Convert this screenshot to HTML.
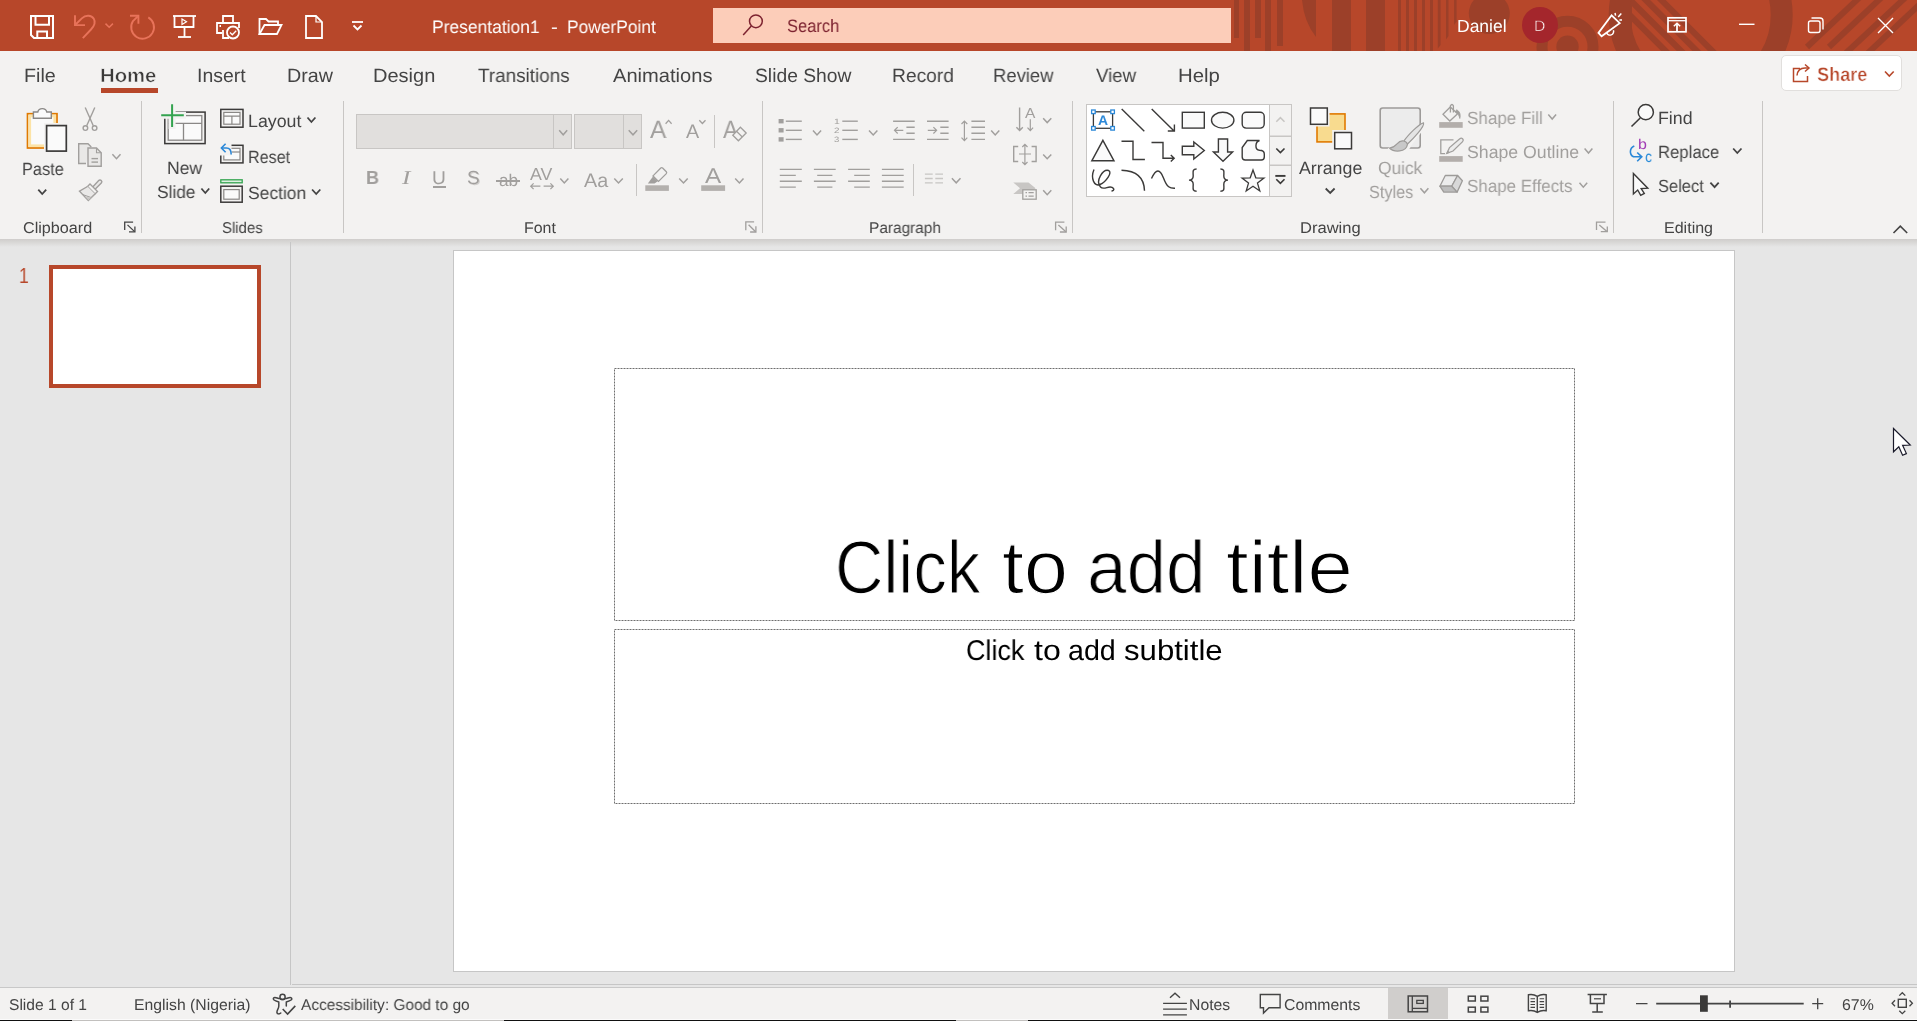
<!DOCTYPE html>
<html lang="en">
<head>
<meta charset="utf-8">
<title>Presentation1 - PowerPoint</title>
<style>
html,body{margin:0;padding:0;}
body{width:1917px;height:1021px;overflow:hidden;position:relative;background:#e6e6e6;font-family:"Liberation Sans",sans-serif;color:#444;}
.abs,.t,svg.i{position:absolute;}
svg.i{left:0;top:0;overflow:visible;}
.t{white-space:nowrap;line-height:1;transform-origin:0 0;will-change:transform;text-rendering:geometricPrecision;}
#titlebar{position:absolute;left:0;top:0;width:1917px;height:51px;background:#b7472a;overflow:hidden;}
#ribbon{position:absolute;left:0;top:51px;width:1917px;height:188px;background:#f3f2f1;}
#rshadow{position:absolute;left:0;top:239px;width:1917px;height:8px;background:linear-gradient(#cfcdcb,#e6e6e6);}
#status{position:absolute;left:0;top:988px;width:1917px;height:33px;background:#f3f2f1;}
.w{position:absolute;top:0;white-space:nowrap;transform-origin:0 0;will-change:transform;}
.thin{-webkit-text-stroke:1.2px #fff;}
.sep{position:absolute;width:1px;background:#c8c6c4;}
</style>
</head>
<body>
<div id="titlebar"></div>
<div id="ribbon"></div>
<div id="rshadow"></div>
<div id="status"></div>
<svg class="i" width="1917" height="51" viewBox="0 0 1917 51" style="overflow:hidden">
<g fill="#9c4029">
<rect x="1234" y="0" width="5" height="38"/><rect x="1244" y="0" width="6" height="51"/><rect x="1255" y="0" width="6" height="38"/><rect x="1265" y="0" width="6" height="51"/><rect x="1277" y="0" width="6" height="46"/>
<path d="M1302 0 H1316 V37 Q1304 22 1302 0Z"/>
<rect x="1332" y="0" width="19" height="51"/><rect x="1366" y="0" width="19" height="51"/>
<rect x="1398" y="0" width="3" height="51"/><rect x="1406" y="0" width="3" height="51"/><rect x="1414" y="0" width="3" height="51"/><rect x="1422" y="0" width="3" height="51"/><rect x="1430" y="0" width="3" height="51"/><path d="M1437.800 0 H1440.600 V45 L1437.800 48.500 Z"/><path d="M1446 0 H1448.500 V36 L1446 39.500 Z"/><path d="M1454.100 0 H1456.600 V21.500 L1454.100 25 Z"/>
<circle cx="1489.300" cy="13.500" r="20.500"/>
</g>
<circle cx="1567.500" cy="46.700" r="11.200" fill="#9c4029"/>
<g fill="none" stroke="#9c4029">
<circle cx="1567.500" cy="46.700" r="25.500" stroke-width="11"/>
<circle cx="1700.700" cy="15" r="81" stroke-width="22"/>
</g>
<clipPath id="cpa"><circle cx="1700.700" cy="15" r="71"/></clipPath>
<g fill="#9c4029" clip-path="url(#cpa)"><rect x="1620" y="0" width="12" height="51"/><g clip-path="url(#cpb)"><path d="M1605.2 -5 L1613.9 -5 L1678.9 60 L1670.2 60 Z"/><path d="M1620.8 -5 L1629.5 -5 L1694.5 60 L1685.8 60 Z"/><path d="M1636.4 -5 L1645.1 -5 L1710.1 60 L1701.4 60 Z"/><path d="M1652.0 -5 L1660.7 -5 L1725.7 60 L1717.0 60 Z"/></g></g>
<clipPath id="cpb"><path d="M1632 0 H1676 L1718 51 H1632 Z"/></clipPath>
<g stroke="#9c4029" stroke-width="6" fill="none">
<path d="M1807 47 L1860 -3"/><path d="M1829 47 L1882 -3"/><path d="M1846 53 L1906 -3"/><path d="M1868 53 L1920 4"/>
</g>
</svg>
<div class="abs" style="left:713px;top:8px;width:518px;height:35px;background:#fccdb9"></div>
<svg class="i" width="1917" height="51" viewBox="0 0 1917 51" fill="none" stroke="#fff" stroke-width="1.8">
<!-- save -->
<g stroke-width="2"><path d="M31 16 H53 V38 H34 L31 35 Z"/><path d="M35.500 16 V24.700 H49 V16"/><path d="M37.300 38 V31.400 H47 V38"/></g>
<!-- undo -->
<g stroke="#e8735a" stroke-width="1.900"><path d="M75 15.200 V25.100 H85"/><path d="M75.600 24.500 L81.800 18.400 C85.800 14.500 91.500 15 93.800 18.800 C95.800 22.300 94.500 25.800 91 29.500 L82.800 38.200"/><path d="M105.500 23.600 L109.200 27.300 L112.900 23.600" stroke-width="1.500"/>
<!-- redo -->
<path d="M130 15.700 H138.400 V23.800"/><path d="M137.800 16.300 L133 21.100 A11.400 11.400 0 1 0 148.300 17.400"/></g>
<!-- slideshow -->
<path d="M173 16 H196"/><path d="M174.500 16 V27 H193.500 V16"/><path d="M184.500 27 V37"/><path d="M178 37 H191"/><path d="M182 19 L186.500 21.800 L182 24.500 Z" stroke-width="1.2"/>
<!-- print preview -->
<path d="M223 23 V16 H233 V23"/><path d="M222 33 H217 V23 H239 V28"/><path d="M223 30 V38 H229"/><path d="M219.500 26 H221"/><circle cx="233" cy="32.500" r="6"/><path d="M230 32.500 L232.300 34.800 L236.200 30.800" stroke-width="1.3"/>
<!-- open -->
<path d="M259.500 34 V19 H266 L268.500 21.500 H278 V25"/><path d="M259.500 34 L264.500 25 H281.500 L277 34 Z"/>
<!-- new -->
<path d="M306 16 H316 L322 22 V38 H306 Z"/><path d="M316 16 V22 H322" stroke-width="1.2"/>
<!-- customize -->
<path d="M352 22 H363"/><path d="M353.500 25.500 L357.500 29.500 L361.500 25.500"/>
<!-- search icon -->
<g stroke="#7d2330" stroke-width="1.500"><circle cx="755.900" cy="21.300" r="6.400"/><path d="M751.300 25.900 L743.200 35"/></g>
<!-- megaphone -->
<path d="M1598.500 32.900 L1611.600 15.300 L1619.700 23.200 L1601.600 36.300 Z"/><path d="M1606.600 32.700 A3.500 3.500 0 0 0 1613.400 30.200" stroke-width="1.500"/><path d="M1615 13 L1615.600 15.700 M1621.300 13.500 L1618.200 16.900 M1619.400 20 H1622" stroke-width="1.500"/>
<!-- ribbon display -->
<rect x="1668" y="17.800" width="18" height="14" stroke-width="1.700"/><path d="M1668 20.700 H1686" stroke-width="1.300"/><path d="M1677 31 V24"/><path d="M1673.800 26.300 L1677 23.300 L1680.200 26.300" stroke-width="1.500"/>
<!-- min -->
<path d="M1739 24.300 H1754.500" stroke-width="1.4"/>
<!-- restore -->
<rect x="1808.500" y="21" width="11.500" height="11.500" rx="2" stroke-width="1.4"/><path d="M1811.500 18 H1820 A3 3 0 0 1 1823 21 V29.500" stroke-width="1.4"/>
<!-- close -->
<path d="M1878 18 L1893 33 M1893 18 L1878 33" stroke-width="1.4"/>
</svg>
<div class="abs" style="left:1521.900px;top:6.800px;width:36px;height:36px;border-radius:50%;background:#a4262c"></div>
<div class="t" style="left:0;top:17px;font-size:18px;line-height:20px;will-change:auto;color:#fff;"><span class="w" style="left:432.37px;transform:scaleX(0.9695)">Presentation1</span> <span class="w" style="left:551.09px;transform:scaleX(1.1378)">-</span> <span class="w" style="left:567.27px;transform:scaleX(0.9653)">PowerPoint</span></div>
<div class="t" style="left:786.85px;top:16px;font-size:18px;line-height:20px;color:#7d2330;transform:scaleX(0.9174);">Search</div>
<div class="t" style="left:1456.87px;top:16px;font-size:17.5px;line-height:20px;color:#fff;">Daniel</div>
<div class="t" style="left:1533.71px;top:18px;font-size:15px;line-height:17px;color:#fff;transform:scaleX(1.0468);-webkit-text-stroke:0.4px #a4262c;">D</div>

<div class="t" style="left:24.08px;top:66px;font-size:19.3px;line-height:21px;color:#444;transform:scaleX(1.0224);">File</div>
<div class="t" style="left:197.21px;top:66px;font-size:19.3px;line-height:21px;color:#444;transform:scaleX(1.0076);">Insert</div>
<div class="t" style="left:287.18px;top:66px;font-size:19.3px;line-height:21px;color:#444;transform:scaleX(1.0207);">Draw</div>
<div class="t" style="left:372.96px;top:66px;font-size:19.3px;line-height:21px;color:#444;transform:scaleX(1.0377);">Design</div>
<div class="t" style="left:477.58px;top:66px;font-size:19.3px;line-height:21px;color:#444;transform:scaleX(0.9790);">Transitions</div>
<div class="t" style="left:613.36px;top:66px;font-size:19.3px;line-height:21px;color:#444;transform:scaleX(1.0429);">Animations</div>
<div class="t" style="left:754.73px;top:66px;font-size:19.3px;line-height:21px;color:#444;">Slide Show</div>
<div class="t" style="left:891.62px;top:66px;font-size:19.3px;line-height:21px;color:#444;transform:scaleX(0.9951);">Record</div>
<div class="t" style="left:993.48px;top:66px;font-size:19.3px;line-height:21px;color:#444;transform:scaleX(0.9572);">Review</div>
<div class="t" style="left:1096.42px;top:66px;font-size:19.3px;line-height:21px;color:#444;transform:scaleX(0.9666);">View</div>
<div class="t" style="left:1178.33px;top:66px;font-size:19.3px;line-height:21px;color:#444;transform:scaleX(1.0563);">Help</div>
<div class="t" style="left:100.44px;top:66px;font-size:19.3px;line-height:21px;color:#3b3a39;font-weight:bold;transform:scaleX(1.0528);-webkit-text-stroke:0.5px #f3f2f1;">Home</div>
<div class="abs" style="left:101px;top:88px;width:57px;height:5px;background:#b7472a"></div>
<div class="abs" style="left:1781px;top:55px;width:119px;height:34px;background:#fff;border:1px solid #e1dfdd;border-radius:5px"></div>
<div class="t" style="left:1817.18px;top:64px;font-size:19.5px;line-height:22px;color:#b7472a;font-weight:bold;transform:scaleX(0.9289);-webkit-text-stroke:0.4px #fff;">Share</div>
<div class="sep" style="left:141px;top:101px;height:132px"></div>
<div class="sep" style="left:343px;top:101px;height:132px"></div>
<div class="sep" style="left:762px;top:101px;height:132px"></div>
<div class="sep" style="left:1072px;top:101px;height:132px"></div>
<div class="sep" style="left:1613px;top:101px;height:132px"></div>
<div class="sep" style="left:1762px;top:101px;height:132px"></div>
<div class="t" style="left:23.38px;top:220px;font-size:15.6px;line-height:17px;color:#444;transform:scaleX(1.0373);">Clipboard</div>
<div class="t" style="left:221.92px;top:220px;font-size:15.6px;line-height:17px;color:#444;transform:scaleX(0.9584);">Slides</div>
<div class="t" style="left:524.29px;top:220px;font-size:15.6px;line-height:17px;color:#444;transform:scaleX(1.0228);">Font</div>
<div class="t" style="left:869.44px;top:220px;font-size:15.6px;line-height:17px;color:#444;transform:scaleX(0.9878);">Paragraph</div>
<div class="t" style="left:1300.14px;top:220px;font-size:15.6px;line-height:17px;color:#444;transform:scaleX(1.0613);">Drawing</div>
<div class="t" style="left:1663.68px;top:220px;font-size:15.6px;line-height:17px;color:#444;transform:scaleX(1.0283);">Editing</div>
<div class="t" style="left:21.66px;top:159px;font-size:17.7px;line-height:20px;color:#444;transform:scaleX(0.9228);">Paste</div>
<div class="t" style="left:166.56px;top:158px;font-size:17.7px;line-height:20px;color:#444;transform:scaleX(0.9912);">New</div>
<div class="t" style="left:156.91px;top:182px;font-size:17.7px;line-height:20px;color:#444;transform:scaleX(0.9770);">Slide</div>
<div class="t" style="left:247.64px;top:111px;font-size:17.7px;line-height:20px;color:#444;transform:scaleX(1.0046);">Layout</div>
<div class="t" style="left:247.77px;top:147px;font-size:17.7px;line-height:20px;color:#444;transform:scaleX(0.9136);">Reset</div>
<div class="t" style="left:248.31px;top:183px;font-size:17.7px;line-height:20px;color:#444;transform:scaleX(0.9863);">Section</div>
<div class="t" style="left:1299.47px;top:158px;font-size:17.7px;line-height:20px;color:#444;transform:scaleX(1.0057);">Arrange</div>
<div class="t" style="left:1377.98px;top:158px;font-size:17.7px;line-height:20px;color:#a19f9d;transform:scaleX(0.9813);">Quick</div>
<div class="t" style="left:1369.16px;top:182px;font-size:17.7px;line-height:20px;color:#a19f9d;transform:scaleX(0.9197);">Styles</div>
<div class="t" style="left:1467.23px;top:108px;font-size:17.7px;line-height:20px;color:#a19f9d;transform:scaleX(0.9632);">Shape Fill</div>
<div class="t" style="left:1467.20px;top:142px;font-size:17.7px;line-height:20px;color:#a19f9d;">Shape Outline</div>
<div class="t" style="left:1467.23px;top:176px;font-size:17.7px;line-height:20px;color:#a19f9d;transform:scaleX(0.9599);">Shape Effects</div>
<div class="t" style="left:1657.54px;top:108px;font-size:17.7px;line-height:20px;color:#444;transform:scaleX(1.0050);">Find</div>
<div class="t" style="left:1657.63px;top:142px;font-size:17.7px;line-height:20px;color:#444;transform:scaleX(0.9441);">Replace</div>
<div class="t" style="left:1658.25px;top:176px;font-size:17.7px;line-height:20px;color:#444;transform:scaleX(0.9304);">Select</div>
<div class="abs" style="left:356px;top:114px;width:214px;height:33px;background:#e1dfdd;border:1px solid #c8c6c4"></div>
<div class="abs" style="left:553px;top:115px;width:1px;height:33px;background:#c8c6c4"></div>
<div class="abs" style="left:574px;top:114px;width:66px;height:33px;background:#e1dfdd;border:1px solid #c8c6c4"></div>
<div class="abs" style="left:623px;top:115px;width:1px;height:33px;background:#c8c6c4"></div>
<div class="abs" style="left:714px;top:115px;width:1px;height:33px;background:#c8c6c4"></div>
<div class="abs" style="left:636px;top:164px;width:1px;height:32px;background:#c8c6c4"></div>
<div class="abs" style="left:913px;top:164px;width:1px;height:32px;background:#c8c6c4"></div>
<div class="t" style="left:365.79px;top:168px;font-size:19px;line-height:21px;color:#a19f9d;font-weight:bold;transform:scaleX(0.9493);">B</div>
<div class="t" style="left:401.60px;top:168px;font-size:19.5px;line-height:21px;color:#a19f9d;font-style:italic;font-family:'Liberation Serif',serif;transform:scaleX(1.2958);">I</div>
<div class="t" style="left:432.42px;top:167px;font-size:18.5px;line-height:21px;color:#a19f9d;transform:scaleX(1.0375);">U</div>
<div class="abs" style="left:432.500px;top:186px;width:13.500px;height:1.600px;background:#a19f9d"></div>
<div class="t" style="left:467.94px;top:169px;font-size:19px;line-height:21px;color:#d2d0ce;">S</div>
<div class="t" style="left:466.94px;top:168px;font-size:19px;line-height:21px;color:#a19f9d;">S</div>
<div class="t" style="left:498.57px;top:171px;font-size:17px;line-height:19px;color:#a19f9d;transform:scaleX(1.0130);">ab</div>
<div class="abs" style="left:496.300px;top:180.200px;width:23.600px;height:1.400px;background:#a19f9d"></div>
<div class="t" style="left:530.17px;top:164px;font-size:17.5px;line-height:20px;color:#a19f9d;transform:scaleX(1.0158);">AV</div>
<div class="t" style="left:584.36px;top:170px;font-size:19.5px;line-height:22px;color:#a19f9d;transform:scaleX(1.0120);">Aa</div>
<div class="t" style="left:649.75px;top:116px;font-size:25px;line-height:28px;color:#a19f9d;transform:scaleX(0.9712);">A</div>
<div class="t" style="left:686.06px;top:121px;font-size:19.5px;line-height:22px;color:#a19f9d;transform:scaleX(1.0131);">A</div>
<div class="t" style="left:723.26px;top:116px;font-size:25px;line-height:28px;color:#a19f9d;transform:scaleX(0.8988);">A</div>
<div class="t" style="left:704.85px;top:164px;font-size:21.5px;line-height:24px;color:#a19f9d;transform:scaleX(1.1293);">A</div>
<svg class="i" width="1917" height="240" viewBox="0 0 1917 240" fill="none">
<path d="M38.3 189.6 L42.2 194.0 L46.2 189.6" stroke="#444" stroke-width="1.8" fill="none"/>
<path d="M201.4 188.5 L205.3 193.0 L209.2 188.5" stroke="#444" stroke-width="1.8" fill="none"/>
<path d="M307.5 117.5 L311.4 122.0 L315.4 117.5" stroke="#444" stroke-width="1.8" fill="none"/>
<path d="M312.1 189.5 L316.2 194.0 L320.3 189.5" stroke="#444" stroke-width="1.8" fill="none"/>
<path d="M1325.7 188.5 L1330.2 193.0 L1334.6 188.5" stroke="#444" stroke-width="1.8" fill="none"/>
<path d="M1733.2 148.5 L1737.3 153.0 L1741.5 148.5" stroke="#444" stroke-width="1.8" fill="none"/>
<path d="M1710.4 182.7 L1714.6 187.2 L1718.7 182.7" stroke="#444" stroke-width="1.8" fill="none"/>
<path d="M112.4 154.3 L116.5 158.7 L120.5 154.3" stroke="#a19f9d" stroke-width="1.5" fill="none"/>
<path d="M559.2 130.3 L563.2 134.8 L567.2 130.3" stroke="#a19f9d" stroke-width="1.5" fill="none"/>
<path d="M628.7 130.3 L633.0 134.8 L637.2 130.3" stroke="#a19f9d" stroke-width="1.5" fill="none"/>
<path d="M560.3 178.5 L564.3 183.0 L568.4 178.5" stroke="#a19f9d" stroke-width="1.5" fill="none"/>
<path d="M614.3 178.5 L618.5 183.0 L622.8 178.5" stroke="#a19f9d" stroke-width="1.5" fill="none"/>
<path d="M679.2 178.5 L683.5 183.0 L687.7 178.5" stroke="#a19f9d" stroke-width="1.5" fill="none"/>
<path d="M735.2 178.5 L739.4 183.0 L743.5 178.5" stroke="#a19f9d" stroke-width="1.5" fill="none"/>
<path d="M813.0 130.5 L817.0 134.9 L821.1 130.5" stroke="#a19f9d" stroke-width="1.5" fill="none"/>
<path d="M869.0 130.5 L873.2 134.9 L877.4 130.5" stroke="#a19f9d" stroke-width="1.5" fill="none"/>
<path d="M991.2 130.5 L995.2 134.9 L999.3 130.5" stroke="#a19f9d" stroke-width="1.5" fill="none"/>
<path d="M1043.2 118.3 L1047.2 122.6 L1051.3 118.3" stroke="#a19f9d" stroke-width="1.5" fill="none"/>
<path d="M1043.2 154.4 L1047.2 158.7 L1051.3 154.4" stroke="#a19f9d" stroke-width="1.5" fill="none"/>
<path d="M1043.2 190.3 L1047.2 194.7 L1051.3 190.3" stroke="#a19f9d" stroke-width="1.5" fill="none"/>
<path d="M951.9 178.3 L956.2 182.8 L960.5 178.3" stroke="#a19f9d" stroke-width="1.5" fill="none"/>
<path d="M1420.4 188.3 L1424.4 192.8 L1428.4 188.3" stroke="#a19f9d" stroke-width="1.5" fill="none"/>
<path d="M1548.3 114.6 L1552.2 119.0 L1556.1 114.6" stroke="#a19f9d" stroke-width="1.5" fill="none"/>
<path d="M1584.6 148.5 L1588.5 153.0 L1592.4 148.5" stroke="#a19f9d" stroke-width="1.5" fill="none"/>
<path d="M1579.5 182.7 L1583.3 187.2 L1587.2 182.7" stroke="#a19f9d" stroke-width="1.5" fill="none"/>
<path d="M1885.0 71.5 L1889.3 76.0 L1893.7 71.5" stroke="#b7472a" stroke-width="1.6" fill="none"/>
<g stroke="#b7472a" stroke-width="1.5"><path d="M1800 68.500 H1793.500 V81.500 H1807.500 V76"/><path d="M1797 75.500 C1797.500 70.500 1800.500 68 1805 68 H1809"/><path d="M1805 64.500 L1809 68 L1805 71.500"/></g>
<path d="M133.1 222.1 H124.7 V230.1" stroke="#444" stroke-width="1.3" fill="none"/><path d="M127.5 224.9 L134.6 231.6" stroke="#444" stroke-width="1.3"/><path d="M134.9 226.4 V231.9 H129.0" stroke="#444" stroke-width="1.3" fill="none"/>
<path d="M754.1 221.9 H745.8 V230.2" stroke="#a19f9d" stroke-width="1.3" fill="none"/><path d="M748.6 224.7 L755.6 231.7" stroke="#a19f9d" stroke-width="1.3"/><path d="M755.9 226.2 V232.0 H750.1" stroke="#a19f9d" stroke-width="1.3" fill="none"/>
<path d="M1064.4 222.2 H1055.6 V230.2" stroke="#a19f9d" stroke-width="1.3" fill="none"/><path d="M1058.4 225.0 L1065.9 231.7" stroke="#a19f9d" stroke-width="1.3"/><path d="M1066.2 226.5 V232.0 H1059.9" stroke="#a19f9d" stroke-width="1.3" fill="none"/>
<path d="M1605.5 222.2 H1596.5 V229.9" stroke="#a19f9d" stroke-width="1.3" fill="none"/><path d="M1599.3 225.0 L1607.0 231.4" stroke="#a19f9d" stroke-width="1.3"/><path d="M1607.3 226.5 V231.7 H1600.8" stroke="#a19f9d" stroke-width="1.3" fill="none"/>
<path d="M1893.500 233 L1900.300 226.200 L1907.200 233" stroke="#444" stroke-width="1.6"/>
</svg>
<svg class="i" width="1917" height="240" viewBox="0 0 1917 240" fill="none" stroke-linejoin="miter">
<rect x="27.500" y="113.700" width="29.500" height="34.300" fill="#fafafa" stroke="#e07a00" stroke-width="1.700"/>
<rect x="29.800" y="116" width="24.900" height="29.700" stroke="#fce3a6" stroke-width="2.600"/>
<path d="M33.400 118.200 V112 H37.800 A4.600 4.300 0 0 1 46.800 112 H51.300 V118.200 Z" fill="#fafafa" stroke="#8a8886" stroke-width="1.400"/>
<rect x="44" y="123" width="25" height="31" fill="#f3f2f1"/>
<rect x="46.600" y="125.600" width="19.700" height="25.500" fill="#fafafa" stroke="#3b3a39" stroke-width="1.700"/>
<g stroke="#a19f9d" stroke-width="1.400"><path d="M85.200 107.500 L93.300 125.800"/><path d="M94.800 107.500 L86.700 125.800"/><circle cx="85.400" cy="128.100" r="2.300"/><circle cx="94.600" cy="128.100" r="2.300"/></g>
<g stroke="#a19f9d" stroke-width="1.400"><path d="M86 163.500 H78.700 V143.800 H88 L91.300 147" fill="#e9e8e7"/>
<path d="M88 148 H96.500 L101.200 152.700 V166.200 H88 Z" fill="#e9e8e7"/><path d="M96.500 148 V152.700 H101.200" stroke-width="1.100"/><path d="M91.500 158.600 H98"/><path d="M91.500 162.100 H98"/></g>
<g stroke="#a19f9d" stroke-width="1.400"><path d="M92.500 187.200 L98.700 180.500 A1.800 1.800 0 0 1 101.300 183 L94.800 189.500" fill="#e9e8e7"/>
<path d="M90 184 L97.500 191.500 L95 194 L87.500 186.500 Z" fill="#f3f2f1"/>
<path d="M87.500 186.500 L79.500 191.200 L88.300 200.500 L95 194" fill="#e9e8e7"/><path d="M82.500 194.500 L91 197.500" stroke-width="1"/><path d="M85 196.800 L88.500 200.200 L94.500 194.500 L91 197.500 Z" fill="#c8c6c4" stroke="none"/></g>
<rect x="164.800" y="112.100" width="40.300" height="31.500" stroke="#3b3a39" stroke-width="1.500"/>
<rect x="168.200" y="115.600" width="33.600" height="24.600" fill="#fafafa" stroke="#8a8886" stroke-width="1.300"/>
<path d="M168.200 123.300 H201.800 M183.500 123.300 V140.200" stroke="#8a8886" stroke-width="1.300"/>
<path d="M159 115.300 H186 M172.100 102 V129" stroke="#f3f2f1" stroke-width="7"/>
<rect x="160" y="108" width="10" height="10" fill="#f3f2f1"/>
<path d="M161.200 115.300 H183.800 M172.100 104.300 V126.900" stroke="#33a34f" stroke-width="2"/>
<rect x="220.800" y="109.400" width="22.200" height="17.800" stroke="#3b3a39" stroke-width="1.500"/>
<rect x="223.800" y="112.400" width="16.200" height="11.800" fill="#fafafa" stroke="#8a8886" stroke-width="1.200"/>
<path d="M223.800 116.200 H240 M231.900 116.200 V124.200" stroke="#8a8886" stroke-width="1.200"/>
<rect x="220.800" y="145.300" width="22.200" height="17.600" stroke="#3b3a39" stroke-width="1.500"/>
<rect x="223.800" y="148.300" width="16.200" height="11.600" fill="#fafafa" stroke="#8a8886" stroke-width="1.200"/>
<path d="M223.800 152 H240" stroke="#8a8886" stroke-width="1.200"/>
<rect x="218" y="141" width="13.500" height="14.500" fill="#f3f2f1"/>
<path d="M225.600 143.800 L221.400 148 L225.600 152.200" stroke="#2b88d8" stroke-width="1.600"/><path d="M221.800 148 H226.500 C229.500 148 231.200 150.500 231.200 154.500" stroke="#2b88d8" stroke-width="1.600"/>
<rect x="220.800" y="179.800" width="21.400" height="3" fill="#dff0e2" stroke="#33a34f" stroke-width="1.300"/>
<rect x="220.800" y="186.200" width="21.400" height="16" stroke="#3b3a39" stroke-width="1.500"/>
<rect x="223.800" y="189.600" width="15.400" height="9.600" fill="#fafafa" stroke="#8a8886" stroke-width="1.200"/>
</svg>
<svg class="i" width="1917" height="240" viewBox="0 0 1917 240" fill="none" stroke="#a19f9d" stroke-width="1.400">
<path d="M665.600 123.700 L668.600 120.400 L671.600 123.700" stroke-width="1.300"/><path d="M699.300 120.200 L702.400 123.500 L705.500 120.200" stroke-width="1.300"/>
<path d="M740.400 127.200 L746.200 133 L738.400 140.800 L732.800 135.200 Z" fill="#f3f2f1" stroke-width="1.300"/><path d="M736.500 131.300 L742.300 137" stroke-width="1.200"/>
<path d="M530.700 186.200 H540.400 M533.600 183.300 L530.700 186.200 L533.600 189.100" stroke-width="1.200"/><path d="M543.600 186.200 H553.300 M550.400 183.300 L553.300 186.200 L550.400 189.100" stroke-width="1.200"/>
<path d="M662.600 168 L666.300 171.700 A1.500 1.500 0 0 1 666.300 173.600 L658.500 181.400 L653 175.900 L660.800 168 A1.300 1.300 0 0 1 662.600 168 Z" stroke-width="1.300"/><path d="M653 176.500 L657.800 181.300 L654.500 183.500 H647.800 Z" fill="#a19f9d" stroke="none"/>
<rect x="645.300" y="185.300" width="23.600" height="5.600" fill="#b3b0ad" stroke="none"/><rect x="701.200" y="185.300" width="23.900" height="5.600" fill="#b3b0ad" stroke="none"/>
<rect x="778.600" y="119.0" width="5" height="4.400" fill="#a19f9d" stroke="none"/><path d="M785.800 121.2 H801.800"/><path d="M842.300 121.2 H857.800"/><rect x="778.600" y="128.1" width="5" height="4.400" fill="#a19f9d" stroke="none"/><path d="M785.800 130.3 H801.800"/><path d="M842.300 130.3 H857.800"/><rect x="778.600" y="137.2" width="5" height="4.400" fill="#a19f9d" stroke="none"/><path d="M785.800 139.4 H801.800"/><path d="M842.300 139.4 H857.800"/>
<path d="M893.1 121.200 H914.7 M906.4 127.300 H914.7 M906.4 133.300 H914.7 M893.1 139.400 H914.7"/><path d="M927 121.200 H948.6 M940.3 127.300 H948.6 M940.3 133.300 H948.6 M927 139.400 H948.6"/><path d="M894.500 130.300 H903.300 M897.700 127.100 L894.500 130.300 L897.700 133.500" stroke-width="1.200"/><path d="M927.800 130.300 H936.600 M933.400 127.100 L936.600 130.300 L933.400 133.500" stroke-width="1.200"/>
<path d="M964.400 121 V140.600 M961.500 124 L964.400 121 L967.300 124 M961.500 137.700 L964.400 140.600 L967.300 137.700" stroke-width="1.200"/><path d="M971.400 121.200 H985 M971.400 127.300 H985 M971.400 133.300 H985 M971.400 139.400 H985"/>
<path d="M1019.600 107.400 V130.600 M1016.400 127.300 L1019.600 130.600 L1022.800 127.300"/><path d="M1030.300 119.300 V130.600 M1027.500 127.700 L1030.300 130.600 L1033.100 127.700" stroke-width="1.200"/>
<path d="M1018.200 146.500 H1013.700 V161.500 H1018.200 M1031.600 146.500 H1036.100 V161.500 H1031.600"/><path d="M1019 154 H1031 M1024.900 144.300 V164.700 M1022.300 147 L1024.900 144.300 L1027.500 147 M1022.300 162 L1024.900 164.700 L1027.500 162" stroke-width="1.200"/>
<path d="M1013.300 182.500 H1028.500 L1035.600 188.200 L1028.500 194 H1013.300 L1020 188.200 Z" fill="#c8c6c4" stroke="none"/><rect x="1022.800" y="189.800" width="13.400" height="9.400" fill="#f3f2f1" stroke-width="1.300"/><path d="M1025.500 192.700 H1027 M1028.500 192.700 H1033.700 M1025.500 196.200 H1027 M1028.500 196.200 H1033.700" stroke-width="1.200"/>
<path d="M779.8 169.4 H801.8 M779.8 175.4 H795.8 M779.8 181.2 H801.8 M779.8 187.1 H795.8"/><path d="M813.9 169.4 H835.7 M817.2 175.4 H832.4 M813.9 181.2 H835.7 M817.2 187.1 H832.4"/><path d="M848.1 169.4 H869.8 M854.2 175.4 H869.8 M848.1 181.2 H869.8 M854.2 187.1 H869.8"/><path d="M881.9 169.4 H903.7 M881.9 175.4 H903.7 M881.9 181.2 H903.7 M881.9 187.1 H903.7"/>
<path d="M924.900 174.200 H932.700 M935.300 174.200 H943 M924.900 178.500 H932.700 M935.300 178.500 H943 M924.900 182.800 H932.700 M935.300 182.800 H943" stroke="#c8c6c4" stroke-width="1.300"/>
</svg>
<div class="t" style="left:833.90px;top:117px;font-size:7.8px;line-height:9px;color:#a19f9d;transform:scaleX(1.3381);">1</div>
<div class="t" style="left:834.20px;top:126px;font-size:7.8px;line-height:9px;color:#a19f9d;transform:scaleX(1.2664);">2</div>
<div class="t" style="left:834.34px;top:135px;font-size:7.8px;line-height:9px;color:#a19f9d;transform:scaleX(1.2168);">3</div>
<div class="t" style="left:1025.07px;top:106px;font-size:14.5px;line-height:16px;color:#a19f9d;transform:scaleX(1.0713);">A</div>
<svg class="i" width="1917" height="240" viewBox="0 0 1917 240" fill="none" stroke="#3b3a39" stroke-width="1.400">
<rect x="1086.500" y="104.500" width="205" height="92" fill="#fff" stroke="#c8c6c4" stroke-width="1"/>
<rect x="1269.500" y="104.500" width="22" height="31.500" fill="#f3f2f1" stroke="#c8c6c4" stroke-width="1"/><rect x="1269.500" y="136.500" width="22" height="28.500" fill="#f3f2f1" stroke="#c8c6c4" stroke-width="1"/><rect x="1269.500" y="165.500" width="22" height="31" fill="#f3f2f1" stroke="#c8c6c4" stroke-width="1"/>
<path d="M1276.300 121.700 L1280.400 117.600 L1284.500 121.700" stroke="#c8c6c4" stroke-width="1.500"/><path d="M1276.300 148.500 L1280.400 152.600 L1284.500 148.500" stroke-width="1.600"/><path d="M1275.300 175.900 H1285.500" stroke-width="1.900"/><path d="M1276.300 179.300 L1280.400 183.400 L1284.500 179.300" stroke-width="1.600"/>
<rect x="1093.400" y="111.800" width="19.200" height="16.500" stroke-width="1.300"/><g stroke="#2b88d8" stroke-width="1.300"><rect x="1091.6" y="110.0" width="3.600" height="3.600" fill="#fff" stroke-width="1.300"/><rect x="1110.8" y="110.0" width="3.600" height="3.600" fill="#fff" stroke-width="1.300"/><rect x="1091.6" y="126.5" width="3.600" height="3.600" fill="#fff" stroke-width="1.300"/><rect x="1110.8" y="126.5" width="3.600" height="3.600" fill="#fff" stroke-width="1.300"/></g>
<path d="M1121.700 109.100 L1144.300 131.300"/><path d="M1151.700 109.100 L1174.300 131.300 M1167.800 131 H1174.400 V124.400"/>
<rect x="1182.300" y="112.300" width="22" height="15.800" fill="#fafafa"/><ellipse cx="1222.700" cy="120.200" rx="11.200" ry="7.900" fill="#fafafa"/><rect x="1242.200" y="112.300" width="22" height="15.800" rx="4" fill="#fafafa"/>
<path d="M1102.900 140.300 L1114 160.800 H1091.800 Z" fill="#fafafa"/><path d="M1121.500 141.200 H1133 V159.500 H1144.900"/><path d="M1151.500 142.500 H1163 V158.300 H1174 M1170.800 155 L1174.200 158.300 L1170.800 161.600"/>
<path d="M1182.300 146.300 H1193.800 V142 L1204.300 150.500 L1193.800 159 V154.700 H1182.300 Z" fill="#fafafa"/><path d="M1218.400 139 H1227.600 V152 H1232.600 L1223 161.200 L1213.400 152 H1218.400 Z" fill="#fafafa"/>
<path d="M1247.300 140.500 H1259.500 C1255 142 1254.500 149.500 1259.500 150.200 C1262.500 150.200 1264.300 151.800 1264.300 154 V157 Q1264.300 160 1261.300 160 H1245.200 Q1242.200 160 1242.200 157 V147.500 Z" fill="#fafafa"/>
<path d="M1094 169.500 C1090.500 178 1094 187 1100 184.500 C1106 182 1113 172 1108.500 170.500 C1103 169 1095 181 1100.500 187 C1104 191 1110 184 1113.500 188.500 C1114.500 190 1113 191 1111.500 191"/>
<path d="M1121.500 170.300 Q1144 171 1144.500 190.800"/><path d="M1151.500 178.500 C1156 168.500 1160 168.500 1163.500 178 C1167 187.500 1170 188.500 1175 188.300"/>
<path d="M1196.600 169 C1192 169 1193.200 172 1193.200 176 C1193.200 179 1191.500 180 1189 180.100 C1191.500 180.200 1193.200 181.200 1193.200 184.200 C1193.200 188.200 1192 191.200 1196.600 191.200"/><path d="M1220.400 169 C1225 169 1223.800 172 1223.800 176 C1223.800 179 1225.500 180 1228 180.100 C1225.500 180.200 1223.800 181.200 1223.800 184.200 C1223.800 188.200 1225 191.200 1220.400 191.200"/>
<path d="M1253.0 170.0 L1255.8 177.8 L1264.0 178.0 L1257.5 183.1 L1259.8 191.0 L1253.0 186.3 L1246.2 191.0 L1248.5 183.1 L1242.0 178.0 L1250.2 177.8 Z" fill="#fafafa" stroke-width="1.300"/>
<rect x="1317" y="113.900" width="28" height="28" fill="#f8db8f" stroke="#e07a00" stroke-width="1.600"/><rect x="1308" y="105.500" width="21.500" height="21" fill="#f3f2f1" stroke="none"/><rect x="1332.200" y="130" width="21.500" height="21" fill="#f3f2f1" stroke="none"/><rect x="1310.500" y="108" width="16.800" height="16.300" fill="#fafafa" stroke-width="1.500"/><rect x="1334.700" y="132.500" width="16.800" height="16.300" fill="#fafafa" stroke-width="1.500"/>
<rect x="1380.200" y="108" width="40" height="40" rx="2.500" fill="#ececec" stroke="#9d9b99" stroke-width="1.600"/><path d="M1388 148.500 C1394 153 1406 153 1409 144 L1424 124" stroke="#f3f2f1" stroke-width="5.500" fill="none"/><path d="M1423.500 122.800 C1425 126.500 1413 139 1407.300 144.200 L1403.800 141.200 C1408 135 1419.500 123.500 1423.500 122.800 Z" fill="#e4e4e4" stroke="#9d9b99" stroke-width="1.200"/><path d="M1403.600 141 C1397 139.500 1397.500 147.500 1389.500 148 C1394 152.500 1406 152.500 1407.500 144.300 C1407 142.500 1405.500 141.300 1403.600 141 Z" fill="#c8c8c8" stroke="#9d9b99" stroke-width="1.200"/>
<g stroke="#a19f9d" stroke-width="1.300"><path d="M1443 114.200 L1450.300 107 L1457.600 113.800 L1449.800 121 Z"/><path d="M1450.400 112.500 V105.800 Q1452 103.200 1453.400 105.800 V112.500"/><path d="M1456.500 109.800 C1459.500 111 1461 114.500 1459.800 118.500 C1459 115 1458 113.500 1455.500 112 Z" fill="#a19f9d" stroke-width="0.800"/></g><rect x="1439.200" y="122.100" width="23.500" height="5.700" fill="#b3aeab" stroke="none"/><rect x="1439.200" y="156.100" width="23.500" height="5.700" fill="#b3aeab" stroke="none"/>
<g stroke="#a19f9d" stroke-width="1.300"><path d="M1453.500 139.800 H1440.800 V153.700 H1445"/><path d="M1459.800 138.800 A1.900 1.900 0 0 1 1462.600 141.600 L1453 151 L1446.800 153.400 L1449.500 147.600 Z" fill="#ececec"/><path d="M1446.800 153.400 L1447.900 151 L1449.300 152.400 Z" fill="#a19f9d" stroke-width="0.800"/></g>
<g stroke="#9d9b99" stroke-width="1.300" stroke-linejoin="round"><path d="M1445.300 175.500 H1457.600 L1451.700 186.200 H1439.900 Z" fill="#ececec"/><path d="M1457.600 175.500 L1462.400 180.800 L1457.100 192.100 L1451.700 186.200 Z" fill="#d8d8d8"/><path d="M1439.900 186.200 H1451.700 L1457.100 192.100 H1443.800 Z" fill="#bdbdbd"/></g>
<circle cx="1645.800" cy="112.200" r="7.600" fill="#fafafa" stroke-width="1.500"/><path d="M1640.200 118 L1631.500 126.500" stroke-width="1.600"/>
<path d="M1634.300 146 C1629.500 148 1629 154.500 1633.500 156.800 H1641.500 M1637.200 152.500 L1641.800 156.800 L1637.200 161.300" stroke="#2b88d8" stroke-width="1.600"/>
<path d="M1633.400 173.500 V194 L1637.700 190 L1640.700 195.300 L1644.300 193.500 L1641.200 188.600 L1647.800 188.200 Z" fill="#fafafa" stroke-width="1.400"/>
</svg>
<div class="t" style="left:1098.05px;top:112px;font-size:14px;line-height:16px;color:#2b88d8;font-weight:bold;transform:scaleX(0.9901);">A</div>
<div class="t" style="left:1638.27px;top:137px;font-size:14.2px;line-height:16px;color:#a23cb5;transform:scaleX(1.1275);">b</div>
<div class="t" style="left:1644.61px;top:149px;font-size:15.6px;line-height:17px;color:#2288d8;transform:scaleX(0.8921);">c</div>

<div class="abs" style="left:290px;top:242px;width:1px;height:743px;background:#c6c6c6"></div>
<div class="abs" style="left:292px;top:984px;width:1625px;height:1px;background:#c6c6c6"></div>
<div class="abs" style="left:49px;top:265px;width:204px;height:115px;background:#fff;border:4px solid #b7472a"></div>
<div class="t" style="left:18.67px;top:263px;font-size:21.8px;line-height:25px;color:#b7472a;transform:scaleX(0.7979);">1</div>
<div class="abs" style="left:453px;top:250px;width:1280px;height:720px;background:#fff;border:1px solid #c6c6c6"></div>
<svg class="i" width="1917" height="1021" viewBox="0 0 1917 1021" fill="none"><rect x="614.500" y="368.500" width="960" height="252" stroke="#6e6e6e" stroke-width="1" stroke-dasharray="2 1"/><rect x="614.500" y="629.500" width="960" height="174" stroke="#6e6e6e" stroke-width="1" stroke-dasharray="2 1"/><path d="M1893.500 428.500 V451.800 L1898.800 446.800 L1902.600 455.300 L1906.400 453.600 L1902.600 445.300 L1910.200 445 Z" fill="#fff" stroke="#1a1a2a" stroke-width="1.200"/></svg>
<div class="t thin" style="left:0;top:526px;font-size:74.5px;line-height:83px;will-change:auto;color:#000;"><span class="w" style="left:834.69px;transform:scaleX(0.9003)">Click</span> <span class="w" style="left:1002.31px;transform:scaleX(1.0592)">to</span> <span class="w" style="left:1087.18px;transform:scaleX(0.9542)">add</span> <span class="w" style="left:1226.27px;transform:scaleX(1.0933)">title</span></div>
<div class="t" style="left:0;top:635px;font-size:28.5px;line-height:32px;will-change:auto;color:#000;"><span class="w" style="left:966.13px;transform:scaleX(0.9446)">Click</span> <span class="w" style="left:1034.21px;transform:scaleX(1.1246)">to</span> <span class="w" style="left:1067.68px;transform:scaleX(1.0044)">add</span> <span class="w" style="left:1123.53px;transform:scaleX(1.0925)">subtitle</span></div>

<div class="abs" style="left:0;top:987px;width:1917px;height:1px;background:#c8c8c8"></div>
<div class="abs" style="left:1388px;top:988px;width:60px;height:32px;background:#d0cecc"></div>
<div class="t" style="left:9.29px;top:997px;font-size:15.6px;line-height:17px;color:#444;">Slide 1 of 1</div>
<div class="t" style="left:133.91px;top:997px;font-size:15.6px;line-height:17px;color:#444;transform:scaleX(1.0101);">English (Nigeria)</div>
<div class="t" style="left:300.67px;top:997px;font-size:15.6px;line-height:17px;color:#444;transform:scaleX(0.9875);">Accessibility: Good to go</div>
<div class="t" style="left:1189.41px;top:997px;font-size:15.6px;line-height:17px;color:#444;transform:scaleX(1.0101);">Notes</div>
<div class="t" style="left:1284.30px;top:997px;font-size:15.6px;line-height:17px;color:#444;transform:scaleX(1.0127);">Comments</div>
<div class="t" style="left:1841.69px;top:997px;font-size:15.6px;line-height:17px;color:#444;transform:scaleX(1.0176);">67%</div>
<svg class="i" width="1917" height="1021" viewBox="0 0 1917 1021" fill="none" stroke="#444" stroke-width="1.300">
<g stroke-width="1.500" stroke-linecap="round" stroke-linejoin="round"><circle cx="282.550" cy="996.900" r="2.600"/><path d="M280.800 1013 C279.500 1014.200 277.300 1014.300 276.900 1012.500 C276.500 1011 278.800 1008.500 278.800 1006 V1002 C274 1000.500 272.500 999.500 273.600 998 C275 996.500 277.500 998.600 279.900 998.600 C281.500 999.800 283.600 999.800 285.200 998.600 C287.600 998.600 290 996.500 291.400 998 C292.600 999.500 291 1000.500 286.300 1002 V1005.900"/><path d="M282.700 1009 L287.600 1014 L295.300 1005.900" stroke-width="1.600" stroke-linecap="butt" stroke-linejoin="miter"/></g>
<path d="M1163.100 1003.400 H1186.900 M1163.100 1009.100 H1186.900 M1163.100 1014.900 H1186.900" stroke-width="1.400"/><path d="M1170 997.800 L1175 993.300 L1180 997.800" stroke-width="1.400"/>
<path d="M1260.300 994.500 H1280.100 V1007.700 H1269 L1263.500 1013 V1007.700 H1260.300 Z" stroke-width="1.400"/>
<rect x="1408.200" y="996" width="19.300" height="15.800" stroke-width="1.500"/><path d="M1412.300 996 V1011.800 M1412.300 1008.300 H1427.500" stroke-width="1.300"/><rect x="1416.800" y="1000.400" width="6.500" height="3" stroke-width="1.300"/>
<rect x="1468.3" y="996.2" width="7.000" height="4.800" stroke-width="1.500"/><rect x="1480.9" y="996.2" width="7.000" height="4.800" stroke-width="1.500"/><rect x="1468.3" y="1007.2" width="7.000" height="4.800" stroke-width="1.500"/><rect x="1480.9" y="1007.2" width="7.000" height="4.800" stroke-width="1.500"/>
<path d="M1537.300 996.300 C1534.500 994.600 1531 994.300 1528.400 994.800 V1010.700 C1531 1010.200 1534.500 1010.500 1537.300 1012.400 C1540.100 1010.500 1543.600 1010.200 1546.200 1010.700 V994.800 C1543.600 994.300 1540.100 994.600 1537.300 996.300 V1012.400" stroke-width="1.400"/><path d="M1530.500 998.800 H1535 M1530.500 1001.600 H1535 M1530.500 1004.500 H1535 M1530.500 1007.400 H1535 M1539.600 998.800 H1544.100 M1539.600 1001.600 H1544.100 M1539.600 1004.500 H1544.100 M1539.600 1007.400 H1544.100" stroke-width="1.100"/>
<path d="M1587.600 994.600 H1606.900 M1590.400 994.600 V1003.600 H1604 V994.600 M1597.200 1003.600 V1012 M1592.200 1012 H1602.800" stroke-width="1.500"/><path d="M1594 998.800 H1601" stroke-width="1.200"/>
<path d="M1636 1003.700 H1647.500 M1812.200 1003.700 H1823.200 M1817.700 998.200 V1009.200" stroke-width="1.300"/><path d="M1656.200 1003.700 H1803.700 M1730.100 1000.400 V1007.700" stroke-width="1.800"/><rect x="1700" y="995.300" width="7.800" height="16.500" fill="#3b3a39" stroke="none"/>
<rect x="1898.300" y="999.300" width="8" height="8" stroke-width="1.400"/><path d="M1899.300 995.600 L1902.300 992.700 L1905.300 995.600 M1899.300 1010.800 L1902.300 1013.700 L1905.300 1010.800 M1895 1000.300 L1892.100 1003.300 L1895 1006.300 M1909.500 1000.300 L1912.400 1003.300 L1909.500 1006.300" stroke-width="1.300"/>
</svg>
<div class="abs" style="left:0;top:1019px;width:1917px;height:1px;background:#fbfbfb"></div>
<div class="abs" style="left:0;top:1020px;width:1917px;height:1px;background:#c2c0be"></div>
<div class="abs" style="left:0px;top:1020px;width:72px;height:1px;background:#111"></div>
<div class="abs" style="left:504px;top:1020px;width:452px;height:1px;background:#111"></div>
<div class="abs" style="left:1028px;top:1020px;width:889px;height:1px;background:#111"></div>


</body>
</html>
